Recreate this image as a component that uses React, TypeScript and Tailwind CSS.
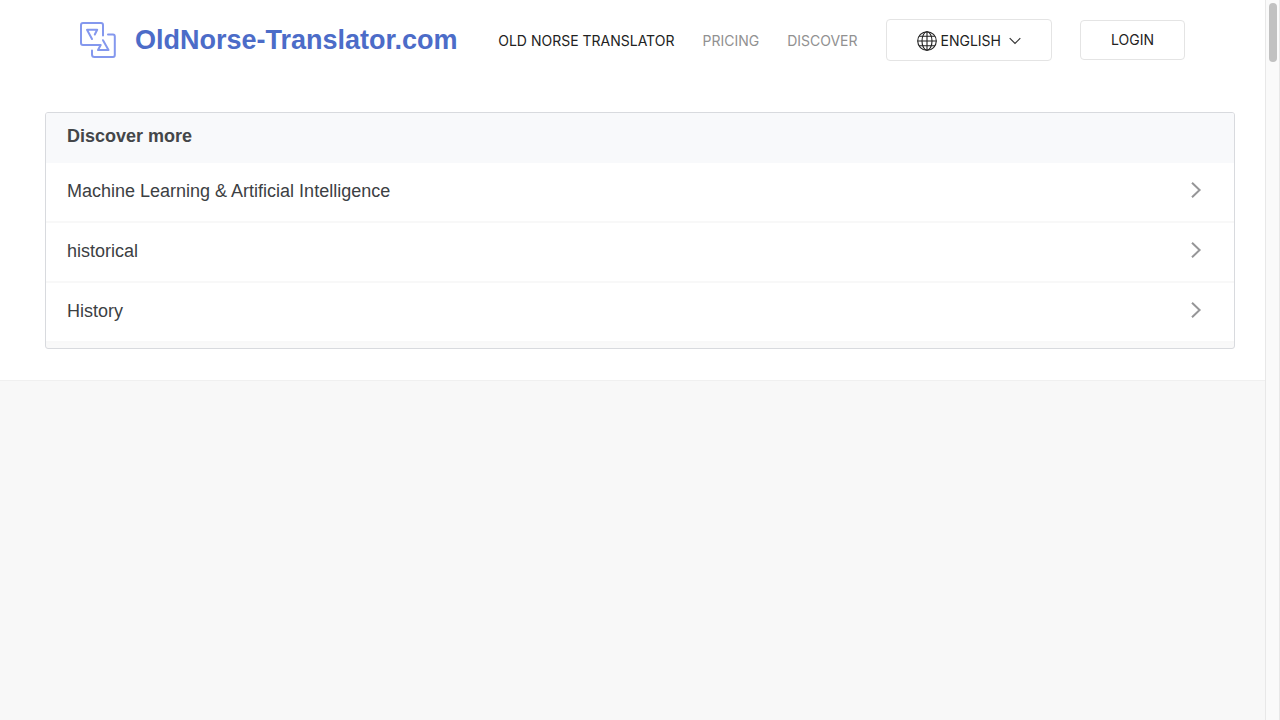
import React from "react";

const topics = ["Machine Learning & Artificial Intelligence", "historical", "History"];

function Logo() {
  return (
    <svg width="36" height="36" viewBox="0 0 36 36" fill="none" stroke="#8498ee" strokeWidth="2" strokeLinecap="round" strokeLinejoin="round" aria-hidden="true">
      <path d="M23 13.500V3Q23 1 21 1H3Q1 1 1 3V21Q1 23 3 23H20.700L18 28H28.500L23 18.200" />
      <path d="M28 12.500H33Q34.800 12.500 34.800 14.500V33Q34.800 35 33 35H14.500Q12 35 12 32.500V28.500" />
      <path d="M12 17L7 7.800H17.200L14.800 12.500" />
    </svg>
  );
}

function Globe() {
  return (
    <svg width="20" height="20" viewBox="0 0 20 20" fill="none" stroke="#222222" strokeWidth="1.100" aria-hidden="true">
      <circle cx="10" cy="10" r="9.300" />
      <ellipse cx="10" cy="10" rx="5" ry="9.300" />
      <path d="M.7 10H19.300M2.300 5.300H17.700M2.300 14.700H17.700M10 .7V19.300" />
    </svg>
  );
}

export default function App() {
  return (
    <div className="flex min-h-screen bg-[#f8f8f8] font-['Inter',sans-serif] text-[#222222]">
      <div className="min-w-0 flex-1">
        <div className="border-b border-[#f0f0f0] bg-white pb-[31px]">
          <header className="flex h-20 items-center pr-20 pl-20">
            <a href="#" className="flex items-center gap-[19px] font-['Liberation_Sans',Arial,sans-serif] text-[27px] leading-8 font-bold text-[#4c6cc8]">
              <Logo />
              <span>OldNorse-Translator.com</span>
            </a>
            <nav className="ml-auto flex items-center gap-7 text-sm leading-5 whitespace-nowrap">
              <a href="#" className="pt-0.5">OLD NORSE TRANSLATOR</a>
              <a href="#" className="pt-0.5 text-[#919191]">PRICING</a>
              <a href="#" className="pt-0.5 text-[#919191]">DISCOVER</a>
              <button type="button" className="flex h-[42px] items-center rounded-[4px] border border-[#e4e4e4] px-[30px] pt-0.5">
                <Globe />
                <span className="ml-1">ENGLISH</span>
                <svg className="ml-2" width="12" height="8" viewBox="0 0 12 8" fill="none" stroke="#333333" strokeWidth="1.200" aria-hidden="true">
                  <path d="M.7 1.200L6 6.500L11.300 1.200" />
                </svg>
              </button>
              <button type="button" className="h-10 rounded-[4px] border border-[#e4e4e4] px-[30px]">LOGIN</button>
            </nav>
          </header>
          <main className="pt-8 pr-[30px] pl-[45px] font-['Liberation_Sans',Arial,sans-serif] text-lg leading-6 text-[#3c4043]">
            <section className="overflow-hidden rounded-[3px] border border-[#d8dade] bg-[#f9f9f9] pb-[5px]">
              <h2 className="h-[50px] bg-[#f8f9fb] px-[21px] pt-[11px] font-bold text-[#444649]">Discover more</h2>
              <ul>
                {topics.map((topic) => (
                  <li key={topic}>
                    <a href="#" className="flex h-[60px] items-center justify-between border-b-2 border-[#f8f8f8] bg-white pr-8 pl-[21px] pb-1">
                      <span className="pt-0.5">{topic}</span>
                      <svg width="12" height="18" viewBox="0 0 12 18" fill="none" stroke="#969698" strokeWidth="2" aria-hidden="true">
                        <path d="M2 1.700L9.600 9L2 16.300" />
                      </svg>
                    </a>
                  </li>
                ))}
              </ul>
            </section>
          </main>
        </div>
      </div>
      <div className="w-[15px] border-x border-[#e8e8e8] bg-[#fafafa] pt-[3px]" aria-hidden="true">
        <div className="mx-auto h-[59px] w-2 rounded-full bg-[#c1c1c1]" />
      </div>
    </div>
  );
}
